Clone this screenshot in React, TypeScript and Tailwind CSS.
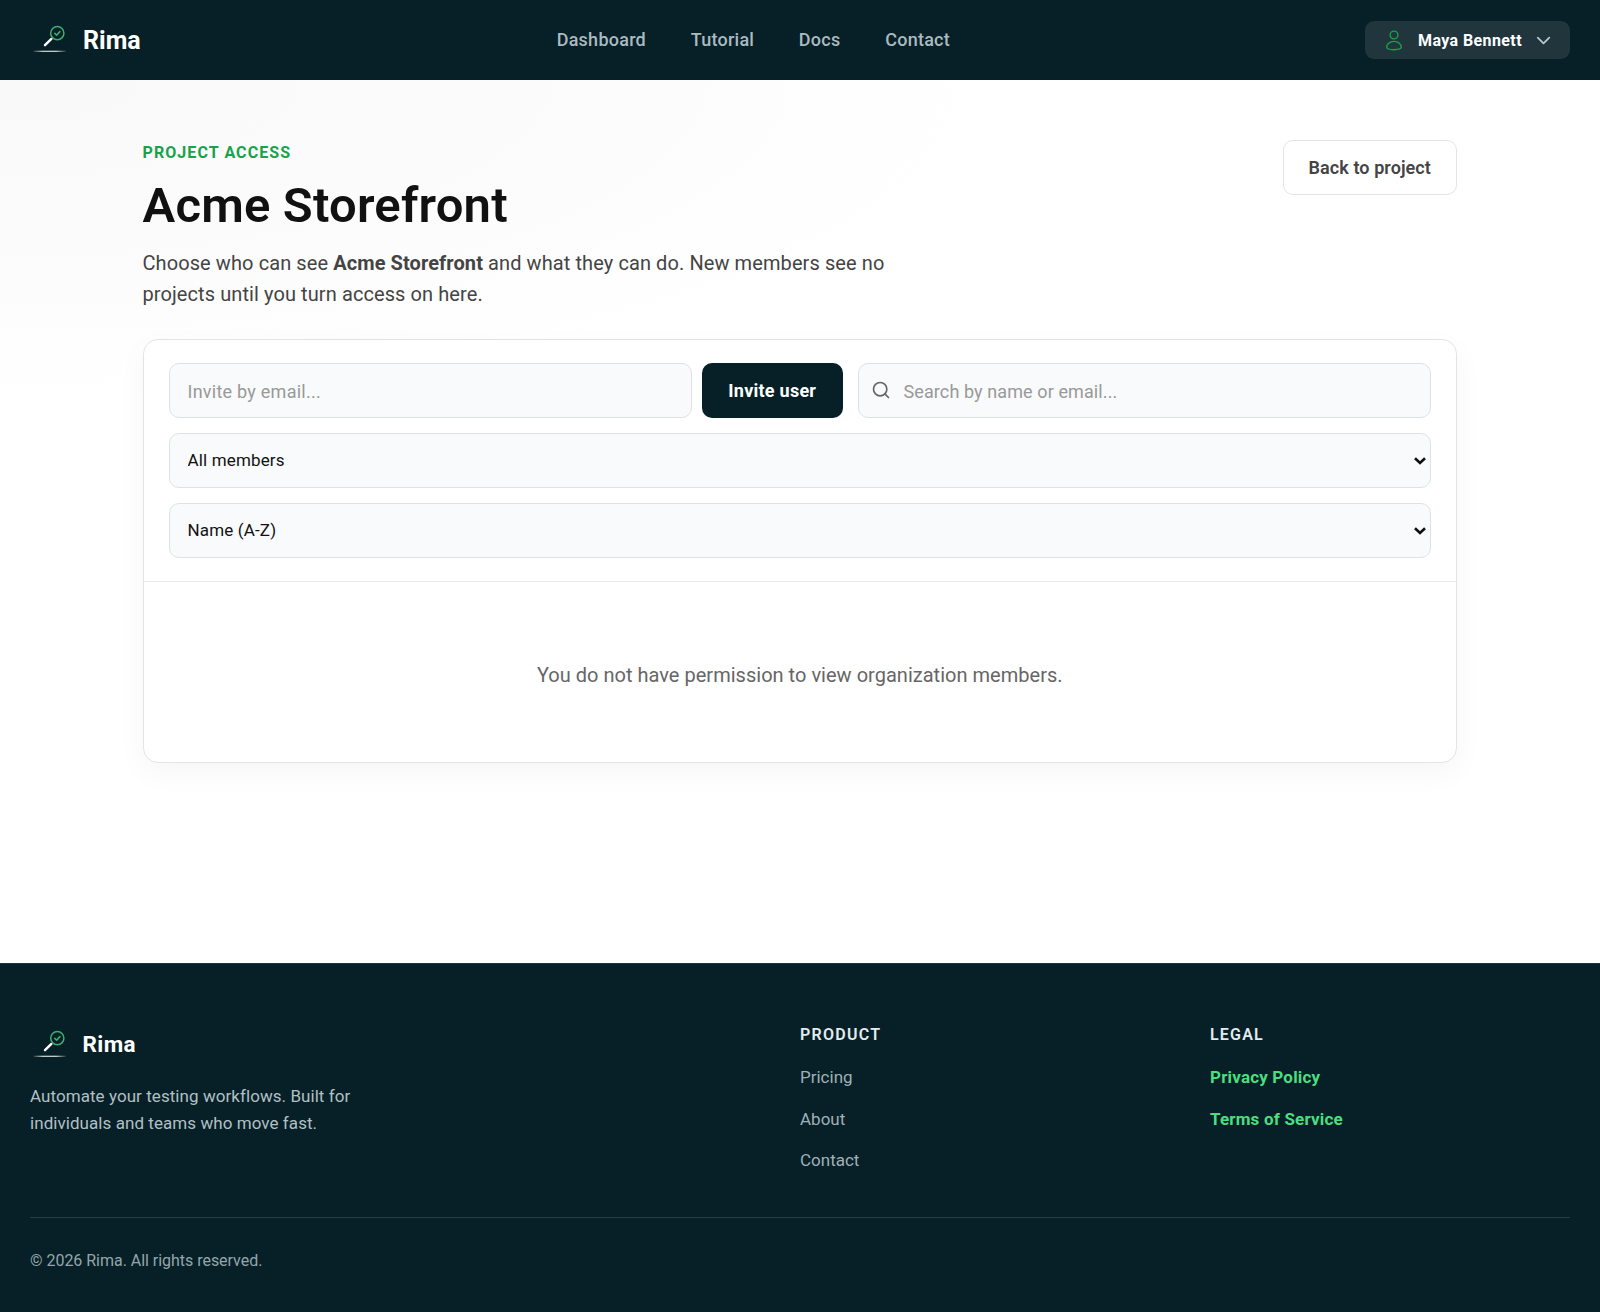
import { ChevronDown, Search } from "lucide-react";

const NAV = ["Dashboard", "Tutorial", "Docs", "Contact"];
const PRODUCT_LINKS = ["Pricing", "About", "Contact"];
const LEGAL_LINKS = ["Privacy Policy", "Terms of Service"];

function LogoMark() {
  return (
    <svg viewBox="0 0 40 40" className="size-10" fill="none">
      <defs>
        <linearGradient id="ground" x1="3" x2="36" y1="0" y2="0" gradientUnits="userSpaceOnUse">
          <stop offset="0" stopColor="#fff" stopOpacity="0.1" />
          <stop offset="0.3" stopColor="#e6f4ec" stopOpacity="0.9" />
          <stop offset="0.7" stopColor="#e6f4ec" stopOpacity="0.9" />
          <stop offset="1" stopColor="#fff" stopOpacity="0.1" />
        </linearGradient>
      </defs>
      <rect x="3.5" y="30.7" width="32.5" height="1.2" fill="url(#ground)" />
      <path d="M15 25.2 21.4 18.9" stroke="#fff" strokeWidth="2.4" strokeLinecap="round" />
      <circle cx="27.3" cy="13.2" r="6.6" stroke="#3fae6c" strokeWidth="1.5" />
      <path d="m24.8 13.4 1.8 1.8 3.3-3.6" stroke="#3fae6c" strokeWidth="1.6" strokeLinecap="round" />
    </svg>
  );
}

function UserIcon() {
  return (
    <svg viewBox="0 0 18 22" className="mt-0.5 h-[22px] w-[18px]" fill="none" stroke="#16a34a" strokeWidth="1.4">
      <circle cx="9" cy="5" r="3.9" />
      <path d="M9 11.4c4.4 0 7.3 3 7.3 5.7 0 1.9-2.2 2.6-7.3 2.6s-7.3-.7-7.3-2.6c0-2.7 2.9-5.7 7.3-5.7Z" />
    </svg>
  );
}

function Header() {
  return (
    <header className="flex h-20 items-center justify-between bg-[#071f26] px-[30px]">
      <div className="flex items-center gap-[13px]">
        <LogoMark />
        <span className="pt-0.5 text-[25px] font-bold text-white">Rima</span>
      </div>
      <nav className="flex gap-[44.7px] pl-px text-lg font-medium tracking-[0.25px] text-[#a9bbc1]">
        {NAV.map(item => (
          <a key={item} href="#">{item}</a>
        ))}
      </nav>
      <button className="flex h-[38px] w-[205px] items-center rounded-[9px] bg-[#21353d] pl-5 text-base font-bold text-white">
        <UserIcon />
        <span className="ml-[15px] pt-0.5 tracking-[0.4px]">Maya Bennett</span>
        <ChevronDown className="mr-[14.5px] ml-auto size-[23px] text-[#b9c9ce]" strokeWidth={1.8} />
      </button>
    </header>
  );
}

const field = "h-[55px] w-full rounded-[10px] border border-[#dfe2e4] bg-[#f8fafb] outline-none";

function SelectField({ label }: { label: string }) {
  return (
    <div className="relative">
      <select className={`${field} appearance-none px-[18px] text-[17px] tracking-[0.15px] text-[#111]`}>
        <option>{label}</option>
      </select>
      <svg viewBox="0 0 12 8" className="absolute top-[24px] right-[5.5px] h-2 w-3" fill="none" stroke="#111" strokeWidth="2.6">
        <path d="m1 1.2 5 4.8 5-4.8" />
      </svg>
    </div>
  );
}

function MembersCard() {
  return (
    <section className="mt-[29px] h-[424px] rounded-[15px] border border-[#e2e4e6] bg-white shadow-[0_10px_30px_rgba(0,0,0,0.04)]">
      <div className="flex h-[242px] flex-col gap-[15px] border-b border-[#e8eaeb] px-[25px] pt-[23px]">
        <div className="flex">
          <input
            placeholder="Invite by email..."
            className={`${field} max-w-[523.5px] px-[18px] pt-0.5 text-lg tracking-[0.25px] placeholder:text-[#999]`}
          />
          <button className="ml-2.5 h-[55px] w-[140.5px] shrink-0 rounded-[10px] bg-[#071f26] text-lg font-bold tracking-[0.25px] text-white">
            Invite user
          </button>
          <div className="relative ml-[15px] flex-1">
            <Search className="absolute top-[17px] left-[13.5px] size-5 text-[#666]" strokeWidth={2} />
            <input
              placeholder="Search by name or email..."
              className={`${field} pt-0.5 pr-4 pl-[45px] text-lg tracking-[0.1px] placeholder:text-[#999]`}
            />
          </div>
        </div>
        <SelectField label="All members" />
        <SelectField label="Name (A-Z)" />
      </div>
      <p className="pt-[78px] text-center text-xl leading-[30px] tracking-[0.02px] text-[#666]">
        You do not have permission to view organization members.
      </p>
    </section>
  );
}

function Footer() {
  return (
    <footer className="h-[349px] border-t border-[#21353d] bg-[#071f26] px-[30px]">
      <div className="grid h-[254px] grid-cols-[770px_410px_1fr] border-b border-[#263b42]">
        <div className="pt-[61px]">
          <div className="flex items-center gap-[12.5px]">
            <LogoMark />
            <span className="text-[22.5px] font-bold tracking-[0.4px] text-white">Rima</span>
          </div>
          <p className="mt-[18px] w-[340px] text-[17px] leading-[27px] tracking-[0.06px] text-[#b0c0c5]">
            Automate your testing workflows. Built for individuals and teams who move fast.
          </p>
        </div>
        <div className="pt-[59px]">
          <h4 className="text-base leading-6 font-semibold tracking-[1.25px] text-[#e3ecef]">PRODUCT</h4>
          <ul className="mt-[18px] space-y-[17.7px] text-[17px] leading-6 text-[#9fb1b7]">
            {PRODUCT_LINKS.map(link => (
              <li key={link}><a href="#">{link}</a></li>
            ))}
          </ul>
        </div>
        <div className="pt-[59px]">
          <h4 className="text-base leading-6 font-semibold tracking-[1.2px] text-[#e3ecef]">LEGAL</h4>
          <ul className="mt-[18px] space-y-[17.7px] text-[17px] leading-6 font-bold tracking-[0.18px] text-[#4ade80]">
            {LEGAL_LINKS.map(link => (
              <li key={link}><a href="#">{link}</a></li>
            ))}
          </ul>
        </div>
      </div>
      <p className="mt-[31px] text-base leading-6 tracking-[-0.03px] text-[#93a6ac]">© 2026 Rima. All rights reserved.</p>
    </footer>
  );
}

export default function App() {
  return (
    <div className="flex h-[1312px] flex-col bg-white font-['Roboto',sans-serif]">
      <Header />
      <main className="flex-1 bg-[radial-gradient(ellipse_1000px_320px_at_0_0,#f9f9f9,#fbfbfb_50%,#ffffff)] pt-[60px] pr-[143px] pl-[142.5px]">
        <div className="flex h-[170px] items-start justify-between">
          <div>
            <p className="pt-px text-base leading-6 font-bold tracking-[1.08px] text-[#16a34a]">PROJECT ACCESS</p>
            <h1 className="mt-[11px] text-[49px] leading-[60px] font-semibold tracking-[0.2px] text-[#111]">Acme Storefront</h1>
            <p className="mt-3 w-[760px] text-xl leading-[31px] tracking-[0.09px] text-[#444]">
              Choose who can see <strong className="font-bold">Acme Storefront</strong> and what they can do. New members see no projects until you turn access on here.
            </p>
          </div>
          <button className="h-[55px] w-[174.5px] rounded-[10px] border border-[#e2e4e6] bg-white text-lg font-semibold tracking-[0.08px] text-[#444]">
            Back to project
          </button>
        </div>
        <MembersCard />
      </main>
      <Footer />
    </div>
  );
}
